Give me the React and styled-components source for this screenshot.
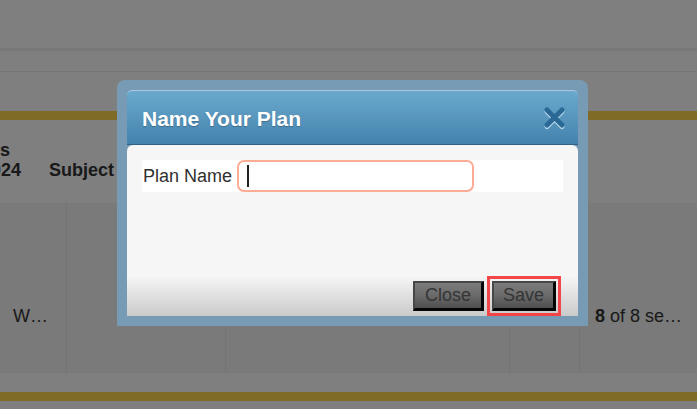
import React from 'react';
import styled, { createGlobalStyle } from 'styled-components';

const Global = createGlobalStyle`
  html, body { margin: 0; padding: 0; }
  body {
    width: 697px;
    height: 409px;
    overflow: hidden;
    background: #fff;
    font-family: "Liberation Sans", Arial, sans-serif;
  }
`;

const Page = styled.div`
  position: relative;
  width: 697px;
  height: 409px;
  overflow: hidden;
  background: #fff;
  color: #333;
  font-size: 18px;
  line-height: 20px;
`;

const TopBar = styled.div`
  height: 48px;
`;

const SubNav = styled.div`
  height: 20px;
  border-top: 3px solid #f1f1f1;
  border-bottom: 1px solid #ececec;
`;

const Spacer = styled.div`
  height: ${(p) => p.$h}px;
`;

const GoldRule = styled.div`
  height: 9px;
  background: #ffd54d;
`;

const HeaderRow = styled.div`
  display: flex;
  align-items: flex-end;
  gap: 28px;
  height: 83px;
  box-sizing: border-box;
  padding: 20px 0 23px;
  font-weight: bold;
  color: #333;
`;

const HeadCell = styled.div`
  display: flex;
  flex-direction: column;
  margin-left: ${(p) => p.$shift || 0}px;
  white-space: nowrap;
`;

const TableRow = styled.div`
  display: grid;
  grid-template-columns: 67px 159px 284px 70px 1fr;
  height: 170px;
  background: #f4f4f4;
`;

const Cell = styled.div`
  border-right: ${(p) => (p.$last ? 'none' : '1px solid #e6e6e6')};
  padding: 103px 0 0 ${(p) => p.$pad || 0}px;
  white-space: nowrap;
  overflow: hidden;
  color: #333;
`;

const Strong = styled.b`
  font-weight: bold;
`;

const Overlay = styled.div`
  position: absolute;
  inset: 0;
  background: rgba(0, 0, 0, 0.502);
`;

const DialogFrame = styled.div`
  position: absolute;
  left: 117px;
  top: 80px;
  width: 471px;
  height: 246px;
  box-sizing: border-box;
  padding: 10px;
  background: #789bb5;
  border-radius: 8px 8px 0 0;
  display: flex;
`;

const Dialog = styled.div`
  flex: 1;
  display: flex;
  flex-direction: column;
`;

const DialogHeader = styled.div`
  height: 55px;
  box-sizing: border-box;
  display: flex;
  align-items: center;
  justify-content: space-between;
  padding: 0 10px 0 15px;
  background: linear-gradient(to bottom, #6aa9cd 0%, #5896be 50%, #4282ac 100%);
  border-top: 1px solid #a9c8dc;
  border-bottom: 1px solid #2f6283;
  border-radius: 5px 5px 0 0;
`;

const Title = styled.h2`
  margin: 0;
  padding-top: 2px;
  font-size: 21px;
  font-weight: bold;
  color: #fff;
  text-shadow: 0 1px 1px rgba(0, 0, 0, 0.25);
`;

const CloseIcon = styled.svg`
  width: 26px;
  height: 26px;
  display: block;
  cursor: pointer;
`;

const DialogBody = styled.div`
  flex: 1;
  display: flex;
  flex-direction: column;
  padding: 15px 15px 5px;
  background: linear-gradient(to bottom, #f6f6f6 0px, #f6f6f6 131px, #cacaca 100%);
  border-radius: 6px 6px 0 0;
`;

const FormRow = styled.div`
  display: flex;
  align-items: center;
  gap: 5px;
  height: 32px;
  background: #fff;
`;

const Label = styled.label`
  padding-left: 1px;
  font-size: 18px;
  color: #2f2f2f;
`;

const InputBox = styled.div`
  width: 237px;
  height: 32px;
  box-sizing: border-box;
  display: flex;
  align-items: center;
  padding-left: 8px;
  border: 2px solid #fcab95;
  border-radius: 7px;
  background: #fff;
`;

const Caret = styled.span`
  width: 2px;
  height: 22px;
  background: #222;
  flex: none;
`;

const TextInput = styled.input`
  flex: 1;
  min-width: 0;
  border: none;
  outline: none;
  background: transparent;
  font: inherit;
  padding: 0;
  caret-color: transparent;
`;

const ButtonRow = styled.div`
  margin-top: auto;
  display: flex;
  justify-content: flex-end;
  gap: 8px;
  padding-right: 7px;
`;

const Button = styled.button`
  height: 30px;
  box-sizing: border-box;
  padding: 0 ${(p) => p.$px || 10}px;
  font-family: "Liberation Sans", Arial, sans-serif;
  font-size: 18px;
  color: #353535;
  background: linear-gradient(to bottom, #7c7c7c 0%, #6a6a6a 50%, #4f4f4f 100%);
  border-style: solid;
  border-width: 2px 3px 3px 2px;
  border-color: #474747 #050505 #050505 #474747;
  outline: ${(p) => (p.$focused ? '3px solid #f44646' : 'none')};
  outline-offset: 2px;
  cursor: pointer;
`;

export default function App() {
  return (
    <>
      <Global />
      <Page>
        <TopBar />
        <SubNav />
        <Spacer $h={39} />
        <GoldRule />
        <HeaderRow>
          <HeadCell $shift={-19}>
            <span>Yrs</span>
            <span>2024</span>
          </HeadCell>
          <HeadCell>
            <span>Subject</span>
          </HeadCell>
        </HeaderRow>
        <TableRow>
          <Cell $pad={13}>W…</Cell>
          <Cell />
          <Cell />
          <Cell />
          <Cell $pad={15} $last>
            <Strong>8</Strong> of 8 se…
          </Cell>
        </TableRow>
        <Spacer $h={19} />
        <GoldRule />

        <Overlay />

        <DialogFrame>
          <Dialog>
            <DialogHeader>
              <Title>Name Your Plan</Title>
              <CloseIcon viewBox="0 0 26 26">
                <g stroke="#bcd8ea" strokeWidth="5" strokeLinecap="round">
                  <line x1="5" y1="6.5" x2="20" y2="21.5" />
                  <line x1="20" y1="6.5" x2="5" y2="21.5" />
                </g>
                <g stroke="#2a6995" strokeWidth="5" strokeLinecap="round">
                  <line x1="5" y1="5" x2="20" y2="20" />
                  <line x1="20" y1="5" x2="5" y2="20" />
                </g>
              </CloseIcon>
            </DialogHeader>
            <DialogBody>
              <FormRow>
                <Label htmlFor="plan-name">Plan Name</Label>
                <InputBox>
                  <Caret />
                  <TextInput id="plan-name" type="text" defaultValue="" />
                </InputBox>
              </FormRow>
              <ButtonRow>
                <Button $px={10}>Close</Button>
                <Button $px={9} $focused>Save</Button>
              </ButtonRow>
            </DialogBody>
          </Dialog>
        </DialogFrame>
      </Page>
    </>
  );
}
